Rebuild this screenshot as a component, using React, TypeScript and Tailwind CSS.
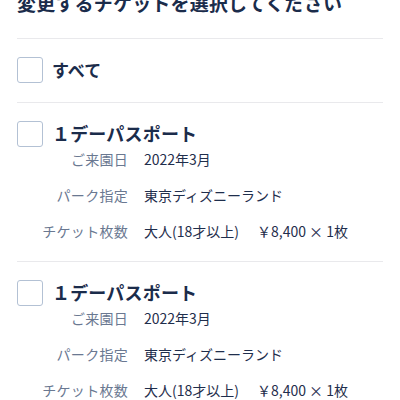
import React from "react";

type Ticket = {
  name: string;
  date: string;
  park: string;
  guest: string;
  price: string;
};

const tickets: Ticket[] = [
  {
    name: "１デーパスポート",
    date: "2022年3月",
    park: "東京ディズニーランド",
    guest: "大人(18才以上)",
    price: "￥8,400 × 1枚",
  },
  {
    name: "１デーパスポート",
    date: "2022年3月",
    park: "東京ディズニーランド",
    guest: "大人(18才以上)",
    price: "￥8,400 × 1枚",
  },
];

function Box() {
  return (
    <span className="block w-[26px] h-[26px] shrink-0 rounded-[3px] border border-[#b3c1d4] bg-white" />
  );
}

function Detail({ label, children }: { label: string; children: React.ReactNode }) {
  return (
    <div className="flex items-center h-[24px]">
      <span className="w-[111px] text-right text-[14px] text-[#6a7891] tracking-[0.02em]">
        {label}
      </span>
      <span className="ml-[16px] text-[14px] text-[#1f2e4c]">{children}</span>
    </div>
  );
}

export default function App() {
  return (
    <div
      className="w-[400px] h-[400px] overflow-hidden bg-white px-[17px]"
      style={{ fontFamily: '"Noto Sans CJK JP", "Noto Sans", sans-serif' }}
    >
      <h1 className="-mt-[12px] h-[50px] text-[19px] leading-[30px] font-bold text-[#1b2c4b] tracking-[0.01em]">
        変更するチケットを選択してください
      </h1>
      <div className="border-t border-[#e9e9ec]" />
      <label className="flex items-center gap-[9px] pt-[18px] pb-[19px]">
        <Box />
        <span className="text-[17px] font-bold text-[#1b2c4b]">すべて</span>
      </label>
      {tickets.map((t, i) => (
        <div key={i} className="border-t border-[#e9e9ec] pt-[18px] pb-[18px]">
          <label className="flex items-center gap-[9px] h-[26px]">
            <Box />
            <span className="-mt-[2px] text-[18px] font-bold text-[#1b2c4b] tracking-[0.01em]">
              {t.name}
            </span>
          </label>
          <div className="flex flex-col gap-[12px]">
            <Detail label="ご来園日">{t.date}</Detail>
            <Detail label="パーク指定">{t.park}</Detail>
            <Detail label="チケット枚数">
              {t.guest}
              <span className="ml-[18px]">{t.price}</span>
            </Detail>
          </div>
        </div>
      ))}
    </div>
  );
}
